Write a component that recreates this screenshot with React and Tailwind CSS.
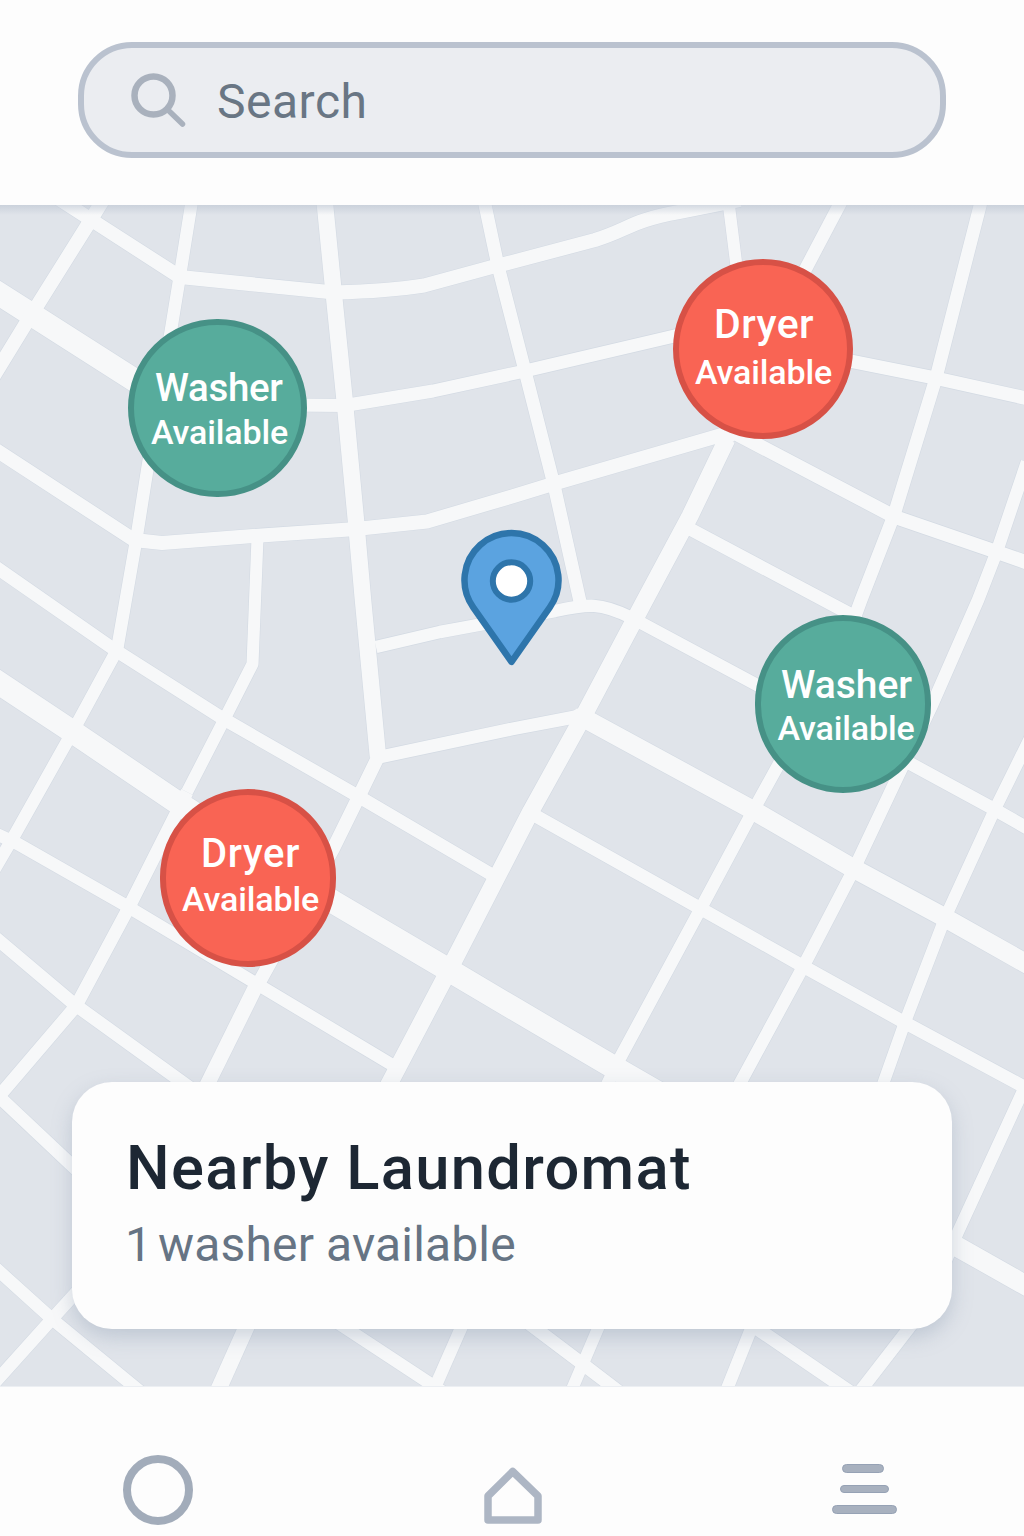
import React from "react";

// Street centre lines: [stroke width, path]
const ROADS = [
  [23, "M-10 288 L34 316 L150 390"],
  [14, "M50 193 L90 219 L180 277 L334 292.5 Q390 291 424 285.500 L492 267 L512 262 L595 240 C630 229 630 221 679 212 L740 200"],
  [14, "M103 200 L87 226 L25 325 L-8 379"],
  [12.5, "M192 200 L180 275 L171 330 L148 465 L136 541 L117 650 L73 731 L14 836 L-6 870"],
  [16.5, "M324.5 200 L333 286 L344.5 399 L356 521 L363 600 L378 757"],
  [13.5, "M379 755 L362 790 L333 849 L256 988"],
  [15, "M256 986 L206 1087"],
  [13, "M290 405 L345 405.5 L433 391 L525 371 L700 330"],
  [13.5, "M835 358 L935 378 L1034 400"],
  [14, "M-10 446 L134 540 L162 543 L253 536 L356 529 L427 521.5 L512 496.5 L556 483 L725 434"],
  [12, "M257.5 538 L252.5 664 L224 720 L187 792"],
  [13, "M187 792 L128 909 L76 1006 L-6 1102"],
  [13, "M-6 1092 L80 1173"],
  [13, "M-10 563 L115 650 L222 718 L356 795 L494 876"],
  [23, "M-10 677 L70 730 L178 803 L335 903 L447 969 L512 1007.5 L615 1068 L700 1117"],
  [12.5, "M-8 832 L18 844 L125 905 L252 981 L394 1066"],
  [13, "M-10 933 L74 1004 L200 1095"],
  [17, "M727 439 L690 516 L645 600 L583 717 L531 811 L449 970 L386 1090"],
  [13, "M690 529 L850 614"],
  [14, "M735 433 L895 517 L994 551 L1034 565"],
  [12, "M728 198 L737 270"],
  [13, "M843 198 L804 272"],
  [13, "M981.500 200 L936 378 L894 515 L861 600 L850 630"],
  [12.5, "M1027 462 L997 551 L978 600 L932 705 L897 778 L854 869 L803 967 L738 1087"],
  [12.5, "M780 762 L753 811 L701 908 L620 1058 L606 1087"],
  [12.5, "M376 647 L440 632 Q520 617 555 611 C588 604 600 602 632 618 L770 692"],
  [13, "M484 200 L498 266 L525 371 L554 485 L581 606"],
  [13, "M380 757 L512 729 L580 716"],
  [19, "M580 716 L749 808 L849 866 L940 915 L1034 968"],
  [13, "M534 815 L696 906 L799 964 L900 1020 L1030 1090"],
  [13, "M900 758 L992 808 L1034 832"],
  [12, "M1034 730 L995 809 L945 918 L905 1022 L882 1087"],
  [12, "M1027 1082 L958 1232 L940 1275"],
  [20, "M930 1231 L956 1246 L1034 1290"],
  [12.5, "M-10 1263 L52 1319 L142 1393"],
  [12.5, "M92 1275 L52 1319 L-10 1388"],
  [16, "M250 1319 L216 1395"],
  [12.5, "M332 1319 L446 1394"],
  [12.5, "M465 1319 L432 1394"],
  [13, "M523 1319 L580 1362 L622 1394"],
  [12, "M602 1319 L570 1394"],
  [12.5, "M755 1319 L725 1394"],
  [13.5, "M743 1319 L853 1394"],
  [12.5, "M916 1319 L858 1394"],
];

function StreetMap() {
  return (
    <svg className="block h-full w-full" viewBox="0 205 1024 1181" fill="none" strokeLinejoin="round">
      {ROADS.map(([w, d]) => (
        <path key={d} d={d} stroke="#d3dae3" strokeWidth={w + 1.2} />
      ))}
      {ROADS.map(([w, d]) => (
        <path key={d} d={d} stroke="#f7f8f9" strokeWidth={w} />
      ))}
      <circle cx="729" cy="436" r="7" fill="#f7f8f9" />
      <circle cx="580" cy="717" r="9" fill="#f7f8f9" />
    </svg>
  );
}

function Marker({ className, kind, kindClass, statusClass }) {
  return (
    <div className={"absolute rounded-full border-[6px] font-medium text-white whitespace-nowrap " + className}>
      <span className={"absolute leading-none " + kindClass}>{kind}</span>
      <span className={"absolute text-[34px] leading-none tracking-[-0.15px] " + statusClass}>Available</span>
    </div>
  );
}

const GREEN = "border-[#469186] bg-[#57ac9c]";
const RED = "border-[#d75146] bg-[#f96454]";

export default function App() {
  return (
    <div className="flex h-[1536px] w-[1024px] flex-col overflow-hidden bg-[#fdfdfd] font-['Roboto',sans-serif]">
      <header className="flex h-[205px] shrink-0 items-start px-[78px] pt-[42px]">
        <div className="flex h-[115.5px] w-[868px] items-center rounded-[54px] border-[6px] border-[#bac2cf] bg-[#ebedf1] pl-[46px]">
          <svg width="58" height="58" viewBox="0 0 58 58" fill="none" stroke="#a9b1bd" strokeLinecap="round">
            <circle cx="23.500" cy="24.500" r="19" strokeWidth="6.500" />
            <path d="M38 39 L52.500 53" strokeWidth="5.500" />
          </svg>
          <span className="ml-[29px] pt-[4px] text-[48px] leading-none tracking-[0.5px] text-[#697684]">Search</span>
        </div>
      </header>

      <main className="relative h-[1181px] shrink-0 overflow-hidden bg-[#e0e4ea]">
        <StreetMap />
        <div className="absolute inset-x-0 top-0 h-[10px] bg-linear-to-b from-[#bcc5d2]/60 to-transparent" />

        <Marker className={"left-[128px] top-[114px] h-[178px] w-[179px] " + GREEN} kind="Washer"
          kindClass="left-[21px] top-[44px] text-[38.5px] tracking-[-0.3px]" statusClass="left-[17px] top-[90px]" />
        <Marker className={"left-[673px] top-[54px] h-[180px] w-[180px] " + RED} kind="Dryer"
          kindClass="left-[35px] top-[39px] text-[41px] tracking-[0.4px]" statusClass="left-[16px] top-[90px]" />
        <Marker className={"left-[755px] top-[410px] h-[178px] w-[176px] " + GREEN} kind="Washer"
          kindClass="left-[20px] top-[44.5px] text-[39px]" statusClass="left-[16.5px] top-[90px]" />
        <Marker className={"left-[160px] top-[584px] h-[178px] w-[176px] " + RED} kind="Dryer"
          kindClass="left-[35px] top-[39px] text-[40px] tracking-[0.7px]" statusClass="left-[16px] top-[87px]" />

        <svg className="absolute left-[456px] top-[320px]" width="112" height="146" viewBox="456 525 112 146">
          <path
            d="M511.500 661.800 L473.200 607.300 A47 47 0 1 1 549.800 607.300 Z"
            fill="#5ba3e0" stroke="#2e75ab" strokeWidth="6.500" strokeLinejoin="round"
          />
          <circle cx="511.500" cy="581" r="18.700" fill="#fff" stroke="#2e75ab" strokeWidth="6" />
        </svg>

        <section className="absolute left-[72px] top-[877px] h-[247px] w-[880px] rounded-[40px] bg-[#fdfdfd] px-[55px] pt-[54px] shadow-[0_8px_20px_rgba(130,145,170,0.35)]">
          <h1 className="-ml-[1px] text-[61.5px] leading-[64px] font-medium tracking-[1.3px] text-[#1d2733]">Nearby Laundromat</h1>
          <p className="mt-[17px] -ml-[2px] text-[48px] leading-[56px] tracking-[0.15px] text-[#667484]">
            <span className="tracking-[-6px]">1</span> washer available
          </p>
        </section>
      </main>

      <nav className="flex h-[150px] shrink-0 items-end justify-between border-t border-[#eceff3] pl-[123px] pr-[127px] pb-[11px]">
        <div className="h-[70px] w-[70px] rounded-full border-[8px] border-[#a2acba]" />
        <svg className="translate-x-[1px]" width="60" height="60" viewBox="483 1465 60 60" fill="none" stroke="#adb6c4" strokeWidth="7.500" strokeLinejoin="round">
          <path d="M488 1496 L512.700 1471.500 L538 1496 V1520 H488 Z" />
        </svg>
        <div className="flex w-[66px] flex-col items-center gap-3 pb-[11px]">
          <div className="h-[9px] w-[42px] -translate-x-[1px] rounded-full border border-[#96a2b5] bg-[#a8b1bf]" />
          <div className="h-[8px] w-[49px] rounded-full border border-[#96a2b5] bg-[#a8b1bf]" />
          <div className="h-[9px] w-[65px] rounded-full border border-[#96a2b5] bg-[#a8b1bf]" />
        </div>
      </nav>
    </div>
  );
}
